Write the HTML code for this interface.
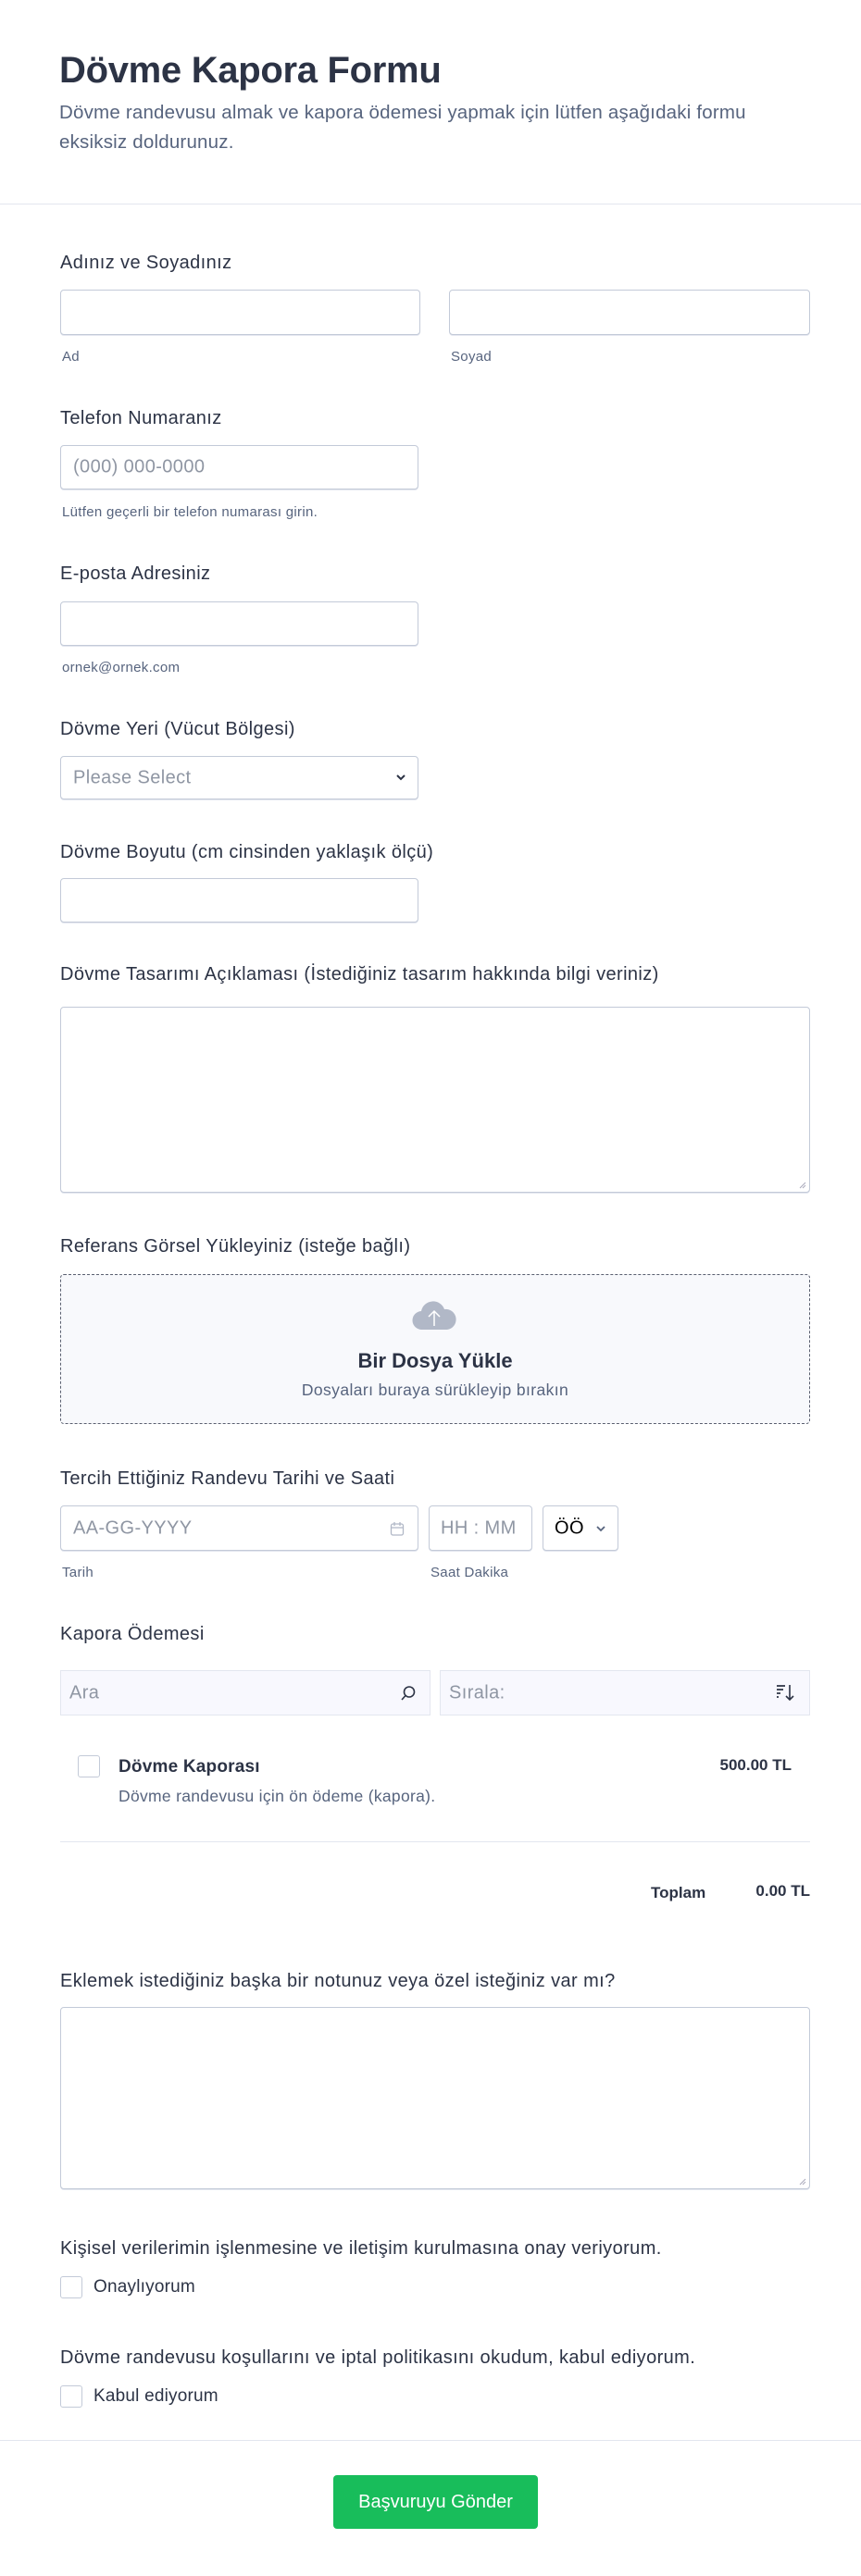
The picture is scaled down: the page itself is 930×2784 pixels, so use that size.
<!DOCTYPE html>
<html><head><meta charset="utf-8">
<style>
*{box-sizing:border-box;margin:0;padding:0}
html,body{width:930px;height:2784px;background:#fff;overflow:hidden}
body{position:relative;font-family:"Liberation Sans",sans-serif;color:#2c3345}
.a{position:absolute}
.lbl{position:absolute;left:65px;font-size:20px;letter-spacing:0.4px;line-height:22px;color:#2c3345;white-space:nowrap}
.sub{position:absolute;font-size:15px;letter-spacing:0.3px;line-height:16px;color:#57647e;white-space:nowrap}
.inp{position:absolute;border:1px solid #c3cad8;border-radius:4px;background:#fff;box-shadow:0 1px 0 #e3e6ef}
.ph{position:absolute;left:13px;top:50%;transform:translateY(-50%);font-size:20px;letter-spacing:0.4px;color:#8f96a3;white-space:nowrap}
.cb{position:absolute;width:24px;height:24px;border:1px solid #c3cad8;border-radius:3px;background:#fff}
</style></head><body>
<div class="a" style="left:64px;top:52px;font-size:40px;font-weight:bold;line-height:48px;color:#2c3345;letter-spacing:-0.3px">Dövme Kapora Formu</div>
<div class="a" style="left:64px;top:106px;width:770px;font-size:20.5px;letter-spacing:0.2px;line-height:32px;color:#57647e">Dövme randevusu almak ve kapora ödemesi yapmak için lütfen aşağıdaki formu eksiksiz doldurunuz.</div>
<div class="a" style="left:0;top:220px;width:930px;height:1px;background:#e3e6ef"></div>

<div class="lbl" style="top:273px">Adınız ve Soyadınız</div>
<div class="inp" style="left:65px;top:313px;width:389px;height:49px"></div>
<div class="inp" style="left:485px;top:313px;width:390px;height:49px"></div>
<div class="sub" style="left:67px;top:378px">Ad</div>
<div class="sub" style="left:487px;top:378px">Soyad</div>

<div class="lbl" style="top:441px">Telefon Numaranız</div>
<div class="inp" style="left:65px;top:481px;width:387px;height:48px"><span class="ph">(000) 000-0000</span></div>
<div class="sub" style="left:67px;top:546px">Lütfen geçerli bir telefon numarası girin.</div>

<div class="lbl" style="top:609px">E-posta Adresiniz</div>
<div class="inp" style="left:65px;top:650px;width:387px;height:48px"></div>
<div class="sub" style="left:67px;top:714px">ornek@ornek.com</div>

<div class="lbl" style="top:777px">Dövme Yeri (Vücut Bölgesi)</div>
<div class="inp" style="left:65px;top:817px;width:387px;height:47px"><span class="ph">Please Select</span>
<svg class="a" style="right:12px;top:18px" width="12" height="9" viewBox="0 0 12 9"><path d="M2 2l4 4 4-4" fill="none" stroke="#2c3345" stroke-width="2"/></svg></div>

<div class="lbl" style="top:910px">Dövme Boyutu (cm cinsinden yaklaşık ölçü)</div>
<div class="inp" style="left:65px;top:949px;width:387px;height:48px"></div>

<div class="lbl" style="top:1042px">Dövme Tasarımı Açıklaması (İstediğiniz tasarım hakkında bilgi veriniz)</div>
<div class="inp" style="left:65px;top:1088px;width:810px;height:201px">
<svg class="a" style="right:3px;bottom:3px" width="10" height="10" viewBox="0 0 10 10"><path d="M9 3L3 9M9 6L6 9" stroke="#aab" stroke-width="1"/></svg></div>

<div class="lbl" style="top:1336px">Referans Görsel Yükleyiniz (isteğe bağlı)</div>
<div class="a" style="left:65px;top:1377px;width:810px;height:162px;border:1px dashed #5a6070;border-radius:4px;background:#f8f9fc"></div>
<svg class="a" style="left:444px;top:1403px" width="50" height="36" viewBox="0 0 50 36"><path d="M12 34a10 10 0 0 1-1-20 13 13 0 0 1 25-2 10 10 0 0 1 3 22z" fill="#b1b8c7"/><path d="M25 30V14M19 20l6-6 6 6" fill="none" stroke="#fff" stroke-width="1.5"/></svg>
<div class="a" style="left:65px;top:1458px;width:810px;text-align:center;font-size:22px;font-weight:bold;color:#2c3345">Bir Dosya Yükle</div>
<div class="a" style="left:65px;top:1492px;width:810px;text-align:center;font-size:17.5px;letter-spacing:0.4px;color:#57647e">Dosyaları buraya sürükleyip bırakın</div>

<div class="lbl" style="top:1587px">Tercih Ettiğiniz Randevu Tarihi ve Saati</div>
<div class="inp" style="left:65px;top:1627px;width:387px;height:49px"><span class="ph">AA-GG-YYYY</span>
<svg class="a" style="right:14px;top:16px" width="16" height="17" viewBox="0 0 16 17"><rect x="1.5" y="3" width="13" height="12" rx="2" fill="none" stroke="#b1b8c7" stroke-width="1.3"/><path d="M1.5 7h13M5 1v4M11 1v4" stroke="#b1b8c7" stroke-width="1.3"/></svg></div>
<div class="inp" style="left:463px;top:1627px;width:112px;height:49px"><span class="ph" style="left:12px">HH : MM</span></div>
<div class="inp" style="left:586px;top:1627px;width:82px;height:49px"><span class="ph" style="color:#000;left:12px">ÖÖ</span>
<svg class="a" style="right:12px;top:20px" width="12" height="8" viewBox="0 0 12 8"><path d="M2 2l4 4 4-4" fill="none" stroke="#57647e" stroke-width="1.8"/></svg></div>
<div class="sub" style="left:67px;top:1692px">Tarih</div>
<div class="sub" style="left:465px;top:1692px">Saat Dakika</div>

<div class="lbl" style="top:1755px">Kapora Ödemesi</div>
<div class="a" style="left:65px;top:1805px;width:400px;height:49px;background:#f8f8fe;border:1px solid #e3e6ef"><span class="ph" style="left:9px">Ara</span>
<svg class="a" style="right:14px;top:15px" width="18" height="18" viewBox="0 0 18 18"><circle cx="10" cy="7.5" r="5.5" fill="none" stroke="#2c3345" stroke-width="1.6"/><path d="M6 11.5L2 16" stroke="#2c3345" stroke-width="1.6"/></svg></div>
<div class="a" style="left:475px;top:1805px;width:400px;height:49px;background:#f8f8fe;border:1px solid #e3e6ef"><span class="ph" style="left:9px">Sırala:</span>
<svg class="a" style="right:14px;top:14px" width="22" height="20" viewBox="0 0 22 20"><path d="M1 2h9M1 6h7M1 10h4M1 14h2" stroke="#2c3345" stroke-width="1.8"/><path d="M15 1v16M11 13l4 4 4-4" fill="none" stroke="#2c3345" stroke-width="1.6"/></svg></div>

<div class="cb" style="left:84px;top:1897px"></div>
<div class="a" style="left:128px;top:1899px;font-size:19px;letter-spacing:0.2px;font-weight:bold;color:#2c3345">Dövme Kaporası</div>
<div class="a" style="left:128px;top:1931px;font-size:17.5px;letter-spacing:0.3px;color:#57647e">Dövme randevusu için ön ödeme (kapora).</div>
<div class="a" style="right:75px;top:1898px;font-size:17px;font-weight:bold;color:#2c3345">500.00 TL</div>
<div class="a" style="left:65px;top:1990px;width:810px;height:1px;background:#e3e6ef"></div>
<div class="a" style="left:703px;top:2036px;font-size:17px;font-weight:bold;color:#2c3345">Toplam</div>
<div class="a" style="right:55px;top:2034px;font-size:17px;font-weight:bold;color:#2c3345">0.00 TL</div>

<div class="lbl" style="top:2130px">Eklemek istediğiniz başka bir notunuz veya özel isteğiniz var mı?</div>
<div class="inp" style="left:65px;top:2169px;width:810px;height:197px">
<svg class="a" style="right:3px;bottom:3px" width="10" height="10" viewBox="0 0 10 10"><path d="M9 3L3 9M9 6L6 9" stroke="#aab" stroke-width="1"/></svg></div>

<div class="lbl" style="top:2419px">Kişisel verilerimin işlenmesine ve iletişim kurulmasına onay veriyorum.</div>
<div class="cb" style="left:65px;top:2460px"></div>
<div class="a" style="left:101px;top:2461px;font-size:19px;letter-spacing:0.2px;color:#2c3345">Onaylıyorum</div>

<div class="lbl" style="top:2537px">Dövme randevusu koşullarını ve iptal politikasını okudum, kabul ediyorum.</div>
<div class="cb" style="left:65px;top:2578px"></div>
<div class="a" style="left:101px;top:2579px;font-size:19px;letter-spacing:0.2px;color:#2c3345">Kabul ediyorum</div>

<div class="a" style="left:0;top:2637px;width:930px;height:1px;background:#e3e6ef"></div>
<div class="a" style="left:360px;top:2675px;width:221px;height:58px;background:#18bd5b;border-radius:4px;color:#fff;font-size:20px;line-height:58px;text-align:center">Başvuruyu Gönder</div>
</body></html>
